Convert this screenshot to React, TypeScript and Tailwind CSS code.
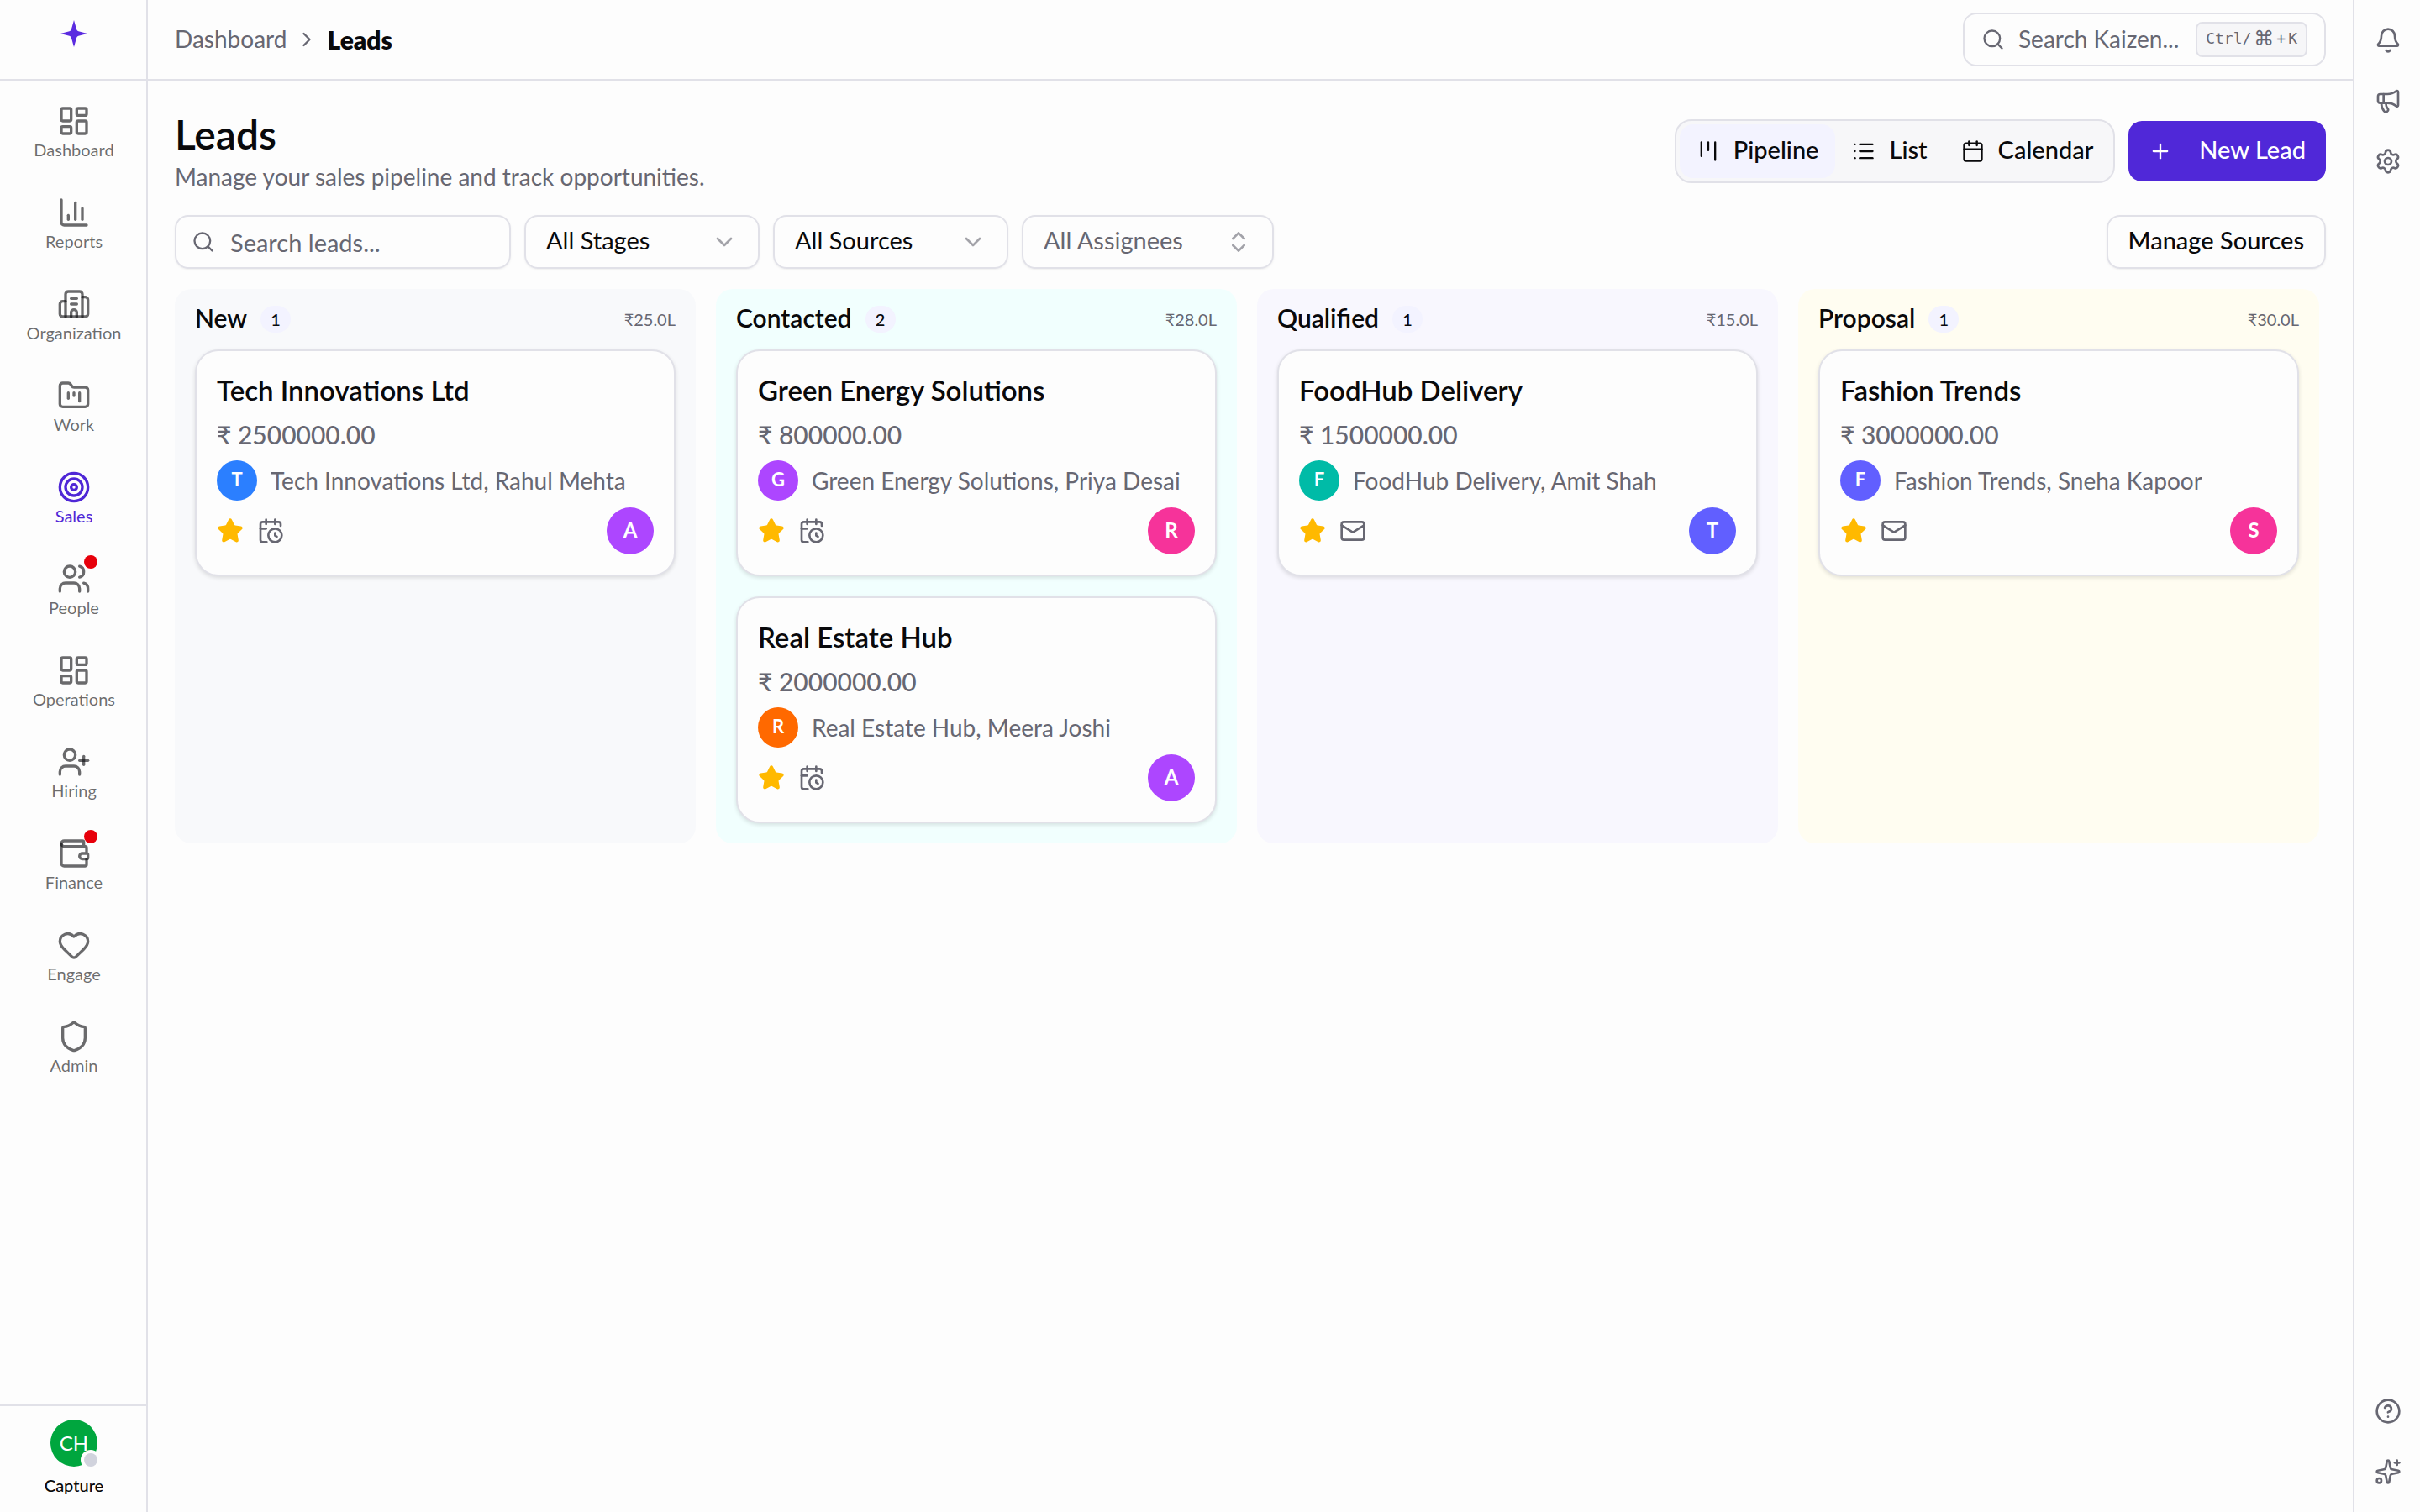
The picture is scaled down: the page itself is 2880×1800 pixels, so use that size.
import { useState } from 'react'
import {
    Bell,
    Building2,
    Calendar,
    CalendarClock,
    ChartColumn,
    ChevronDown,
    ChevronRight,
    ChevronsUpDown,
    CircleQuestionMark,
    FolderKanban,
    Heart,
    Kanban,
    LayoutDashboard,
    List,
    Mail,
    Megaphone,
    Plus,
    Search,
    Settings,
    Shield,
    Sparkles,
    Star,
    Target,
    UserPlus,
    Users,
    Wallet,
    type LucideIcon,
} from 'lucide-react'

interface NavItem {
    label: string;
    icon: LucideIcon;
    alert?: boolean;
}

interface Lead {
    name: string;
    amount: string;
    contact: string;
    color: string;
    activity: 'meeting' | 'mail';
    owner: string;
    ownerColor: string;
}

interface Stage {
    name: string;
    total: string;
    bg: string;
    leads: Lead[];
}

const navItems: NavItem[] = [
    { label: 'Dashboard', icon: LayoutDashboard },
    { label: 'Reports', icon: ChartColumn },
    { label: 'Organization', icon: Building2 },
    { label: 'Work', icon: FolderKanban },
    { label: 'Sales', icon: Target },
    { label: 'People', icon: Users, alert: true },
    { label: 'Operations', icon: LayoutDashboard },
    { label: 'Hiring', icon: UserPlus },
    { label: 'Finance', icon: Wallet, alert: true },
    { label: 'Engage', icon: Heart },
    { label: 'Admin', icon: Shield },
]

const stages: Stage[] = [
    {
        name: 'New',
        total: '₹25.0L',
        bg: 'bg-[#f8f9fb]',
        leads: [
            { name: 'Tech Innovations Ltd', amount: '2500000.00', contact: 'Rahul Mehta', color: 'bg-[#2b7fff]', activity: 'meeting', owner: 'A', ownerColor: 'bg-[#ad46ff]' },
        ],
    },
    {
        name: 'Contacted',
        total: '₹28.0L',
        bg: 'bg-[#f1fffe]',
        leads: [
            { name: 'Green Energy Solutions', amount: '800000.00', contact: 'Priya Desai', color: 'bg-[#ad46ff]', activity: 'meeting', owner: 'R', ownerColor: 'bg-[#f6339a]' },
            { name: 'Real Estate Hub', amount: '2000000.00', contact: 'Meera Joshi', color: 'bg-[#ff6900]', activity: 'meeting', owner: 'A', ownerColor: 'bg-[#ad46ff]' },
        ],
    },
    {
        name: 'Qualified',
        total: '₹15.0L',
        bg: 'bg-[#f8f7fe]',
        leads: [
            { name: 'FoodHub Delivery', amount: '1500000.00', contact: 'Amit Shah', color: 'bg-[#00bba7]', activity: 'mail', owner: 'T', ownerColor: 'bg-[#615fff]' },
        ],
    },
    {
        name: 'Proposal',
        total: '₹30.0L',
        bg: 'bg-[#fffdf1]',
        leads: [
            { name: 'Fashion Trends', amount: '3000000.00', contact: 'Sneha Kapoor', color: 'bg-[#615fff]', activity: 'mail', owner: 'S', ownerColor: 'bg-[#f6339a]' },
        ],
    },
]

const views = [
    { label: 'Pipeline', icon: Kanban },
    { label: 'List', icon: List },
    { label: 'Calendar', icon: Calendar },
]

function Sidebar() {
    return (
        <aside className="flex w-44 shrink-0 flex-col border-r-2 border-[#e1e1e8]">
            <a href="#" aria-label="Home" className="flex h-24 shrink-0 justify-center border-b-2 border-[#e1e1e8] pt-6 pl-0.5">
                <svg viewBox="0 0 32 32" className="size-8 text-[#5b2be0]" fill="currentColor">
                    <path d="M16 0 19.2 11.2Q19.7 12.8 21.4 13.2L32 16 21.4 18.8Q19.7 19.2 19.2 20.8L16 32 12.8 20.8Q12.3 19.2 10.6 18.8L0 16 10.6 13.2Q12.3 12.8 12.8 11.2Z" />
                </svg>
            </a>

            <nav className="flex flex-1 flex-col gap-[17px] pt-4 pl-0.5">
                {navItems.map(({ label, icon: Icon, alert }) => (
                    <a
                        key={label}
                        href="#"
                        className={`flex flex-col items-center gap-0.5 pt-3 pb-3.5 text-xl leading-6 ${label === 'Sales' ? 'text-[#4f27d6]' : 'text-[#09090b]/60'}`}
                    >
                        <span className="relative">
                            <Icon className="size-10" />
                            {alert && <span className="absolute -top-2 -right-2 size-4 rounded-full bg-[#e7000b]" />}
                        </span>
                        {label}
                    </a>
                ))}
            </nav>

            <button type="button" className="flex h-32 shrink-0 flex-col items-center border-t-2 border-[#e1e1e8] pt-4 pl-0.5">
                <span className="relative flex size-14 items-center justify-center rounded-full bg-[#00a63e] text-2xl text-white">
                    CH
                    <span className="absolute right-0 bottom-0 size-4 rounded-full bg-[#d1d3dd] ring-4 ring-[#fdfdfd]" />
                </span>
                <span className="mt-2.5 text-xl leading-6 font-medium">Capture</span>
            </button>
        </aside>
    )
}

function Header() {
    return (
        <header className="flex h-24 shrink-0 items-center justify-between border-b-2 border-[#e1e1e8] px-8">
            <nav aria-label="Breadcrumb" className="flex items-center gap-2.5">
                <a href="#" className="pb-0.5 text-[#676772]">Dashboard</a>
                <ChevronRight className="size-7 text-[#676772]" />
                <span className="text-[30px] font-extrabold">Leads</span>
            </nav>

            <button type="button" className="flex h-16 w-[432px] items-center rounded-2xl border-2 border-[#e1e1e8] px-5 text-[#676772]">
                <Search className="size-7" />
                <span className="ml-4 pb-0.5">Search Kaizen...</span>
                <kbd className="ml-auto flex h-[42px] items-center gap-[3px] rounded-lg border-2 border-[#e1e1e8] bg-[#f6f6f8] px-2.5 pb-0.5 font-['DejaVu_Sans_Mono','Liberation_Mono',monospace] text-lg">
                    <span>Ctrl/</span>
                    <span className="font-['DejaVu_Sans',sans-serif] text-2xl">⌘</span>
                    <span>+</span>
                    <span>K</span>
                </kbd>
            </button>
        </header>
    )
}

function FilterSelect({ label, options }: { label: string; options: string[] }) {
    return (
        <div className="relative w-[280px]">
            <select
                aria-label={label}
                className="h-16 w-full appearance-none rounded-2xl border-2 border-[#e1e1e8] pr-16 pb-1 pl-6 text-[29px] shadow-sm shadow-black/5"
            >
                {options.map((option) => (
                    <option key={option}>{option}</option>
                ))}
            </select>
            <ChevronDown className="pointer-events-none absolute top-4 right-[26px] size-8 text-[#676772]/60" />
        </div>
    )
}

function LeadCard({ lead }: { lead: Lead }) {
    const Activity = lead.activity === 'meeting' ? CalendarClock : Mail

    return (
        <article className="flex flex-col gap-2 rounded-[28px] border-2 border-[#e1e1e8] bg-[#fdfdfd] p-6 shadow-[0_2px_5px_rgba(0,0,0,0.12)]">
            <h3 className="text-[33px] leading-[44px] font-semibold">{lead.name}</h3>
            <p className="text-[30px] leading-[46px] font-medium text-[#676772]">₹ {lead.amount}</p>
            <div className="flex items-center gap-4 text-[#676772]">
                <span className={`flex size-12 shrink-0 items-center justify-center rounded-full pb-0.5 text-[22px] font-bold text-white ${lead.color}`}>
                    {lead.name[0]}
                </span>
                <span className="truncate">{lead.name}, {lead.contact}</span>
            </div>
            <div className="flex items-center gap-4">
                <Star className="size-8 fill-[#ffb900] text-[#ffb900]" />
                <Activity className="size-8 text-[#676772]" />
                <span className={`ml-auto flex size-14 items-center justify-center rounded-full pb-0.5 text-2xl font-bold text-white ${lead.ownerColor}`}>
                    {lead.owner}
                </span>
            </div>
        </article>
    )
}

function StageColumn({ stage }: { stage: Stage }) {
    return (
        <section className={`rounded-[20px] px-6 pb-6 ${stage.bg}`}>
            <div className="flex h-[72px] items-center">
                <h2 className="pb-1 text-[30px] font-semibold">{stage.name}</h2>
                <span className="ml-4 flex h-8 min-w-9 items-center justify-center rounded-full bg-[#f3f3ff] px-3 text-xl font-medium">
                    {stage.leads.length}
                </span>
                <span className="ml-auto text-xl text-[#676772]">{stage.total}</span>
            </div>
            <div className="flex flex-col gap-6">
                {stage.leads.map((lead) => (
                    <LeadCard key={lead.name} lead={lead} />
                ))}
            </div>
        </section>
    )
}

function RightRail() {
    return (
        <aside className="flex w-20 shrink-0 flex-col items-center border-l-2 border-[#e1e1e8] py-8 pl-0.5 text-[#676772]">
            <div className="flex flex-col gap-10">
                <button type="button" aria-label="Notifications"><Bell className="size-8" /></button>
                <button type="button" aria-label="Announcements"><Megaphone className="size-8" /></button>
                <button type="button" aria-label="Settings"><Settings className="size-8" /></button>
            </div>
            <div className="mt-auto flex flex-col gap-10">
                <button type="button" aria-label="Help"><CircleQuestionMark className="size-8" /></button>
                <button type="button" aria-label="Assistant"><Sparkles className="size-8" /></button>
            </div>
        </aside>
    )
}

export default function App() {
    const [view, setView] = useState('Pipeline')

    return (
        <div className="flex h-screen bg-[#fdfdfd] font-['Lato','Noto_Sans',sans-serif] text-[28px] leading-10 text-[#09090b]">
            <Sidebar />

            <div className="flex min-w-0 flex-1 flex-col">
                <Header />

                <main className="flex-1 overflow-y-auto px-8 pt-9">
                    <div className="flex items-start justify-between">
                        <div>
                            <h1 className="text-5xl leading-[56px] font-semibold">Leads</h1>
                            <p className="pt-0.5 text-[#676772]">Manage your sales pipeline and track opportunities.</p>
                        </div>
                        <div className="mt-2.5 flex items-center gap-4 text-[29px]">
                            <div className="flex rounded-[20px] border-2 border-[#e1e1e8] bg-[#f7f7f9] p-1">
                                {views.map(({ label, icon: Icon }) => (
                                    <button
                                        key={label}
                                        type="button"
                                        aria-pressed={view === label}
                                        onClick={() => setView(label)}
                                        className={`flex h-16 items-center gap-4 rounded-2xl px-5 font-medium ${view === label ? 'bg-[#f3f3ff]' : ''}`}
                                    >
                                        <Icon className="size-7" />
                                        <span className="pb-1">{label}</span>
                                    </button>
                                ))}
                            </div>
                            <button type="button" className="flex h-[72px] items-center gap-8 rounded-2xl bg-[#5028d8] px-6 font-medium text-white">
                                <Plus className="size-7" />
                                <span className="pb-1">New Lead</span>
                            </button>
                        </div>
                    </div>

                    <div className="mt-[26px] flex items-center gap-4">
                        <div className="relative w-[400px]">
                            <Search className="pointer-events-none absolute top-[18px] left-5 size-7 text-[#676772]" />
                            <input
                                type="search"
                                aria-label="Search leads"
                                placeholder="Search leads..."
                                className="h-16 w-full rounded-2xl border-2 border-[#e1e1e8] pr-5 pl-16 text-[29px] shadow-sm shadow-black/5 placeholder:text-[#676772]"
                            />
                        </div>
                        <FilterSelect label="Stage" options={['All Stages', 'New', 'Contacted', 'Qualified', 'Proposal']} />
                        <FilterSelect label="Source" options={['All Sources']} />
                        <button
                            type="button"
                            className="flex h-16 w-[300px] items-center justify-between rounded-2xl border-2 border-[#e1e1e8] px-6 text-[29px] text-[#676772] shadow-sm shadow-black/5"
                        >
                            <span className="pb-1">All Assignees</span>
                            <ChevronsUpDown className="size-8 opacity-60" />
                        </button>
                        <button type="button" className="ml-auto h-16 rounded-2xl border-2 border-[#e1e1e8] px-6 pb-1 text-[29px] font-medium shadow-sm shadow-black/5">
                            Manage Sources
                        </button>
                    </div>

                    <div className="mt-6 grid grid-cols-4 gap-6 pr-2">
                        {stages.map((stage) => (
                            <StageColumn key={stage.name} stage={stage} />
                        ))}
                    </div>
                </main>
            </div>

            <RightRail />
        </div>
    )
}
